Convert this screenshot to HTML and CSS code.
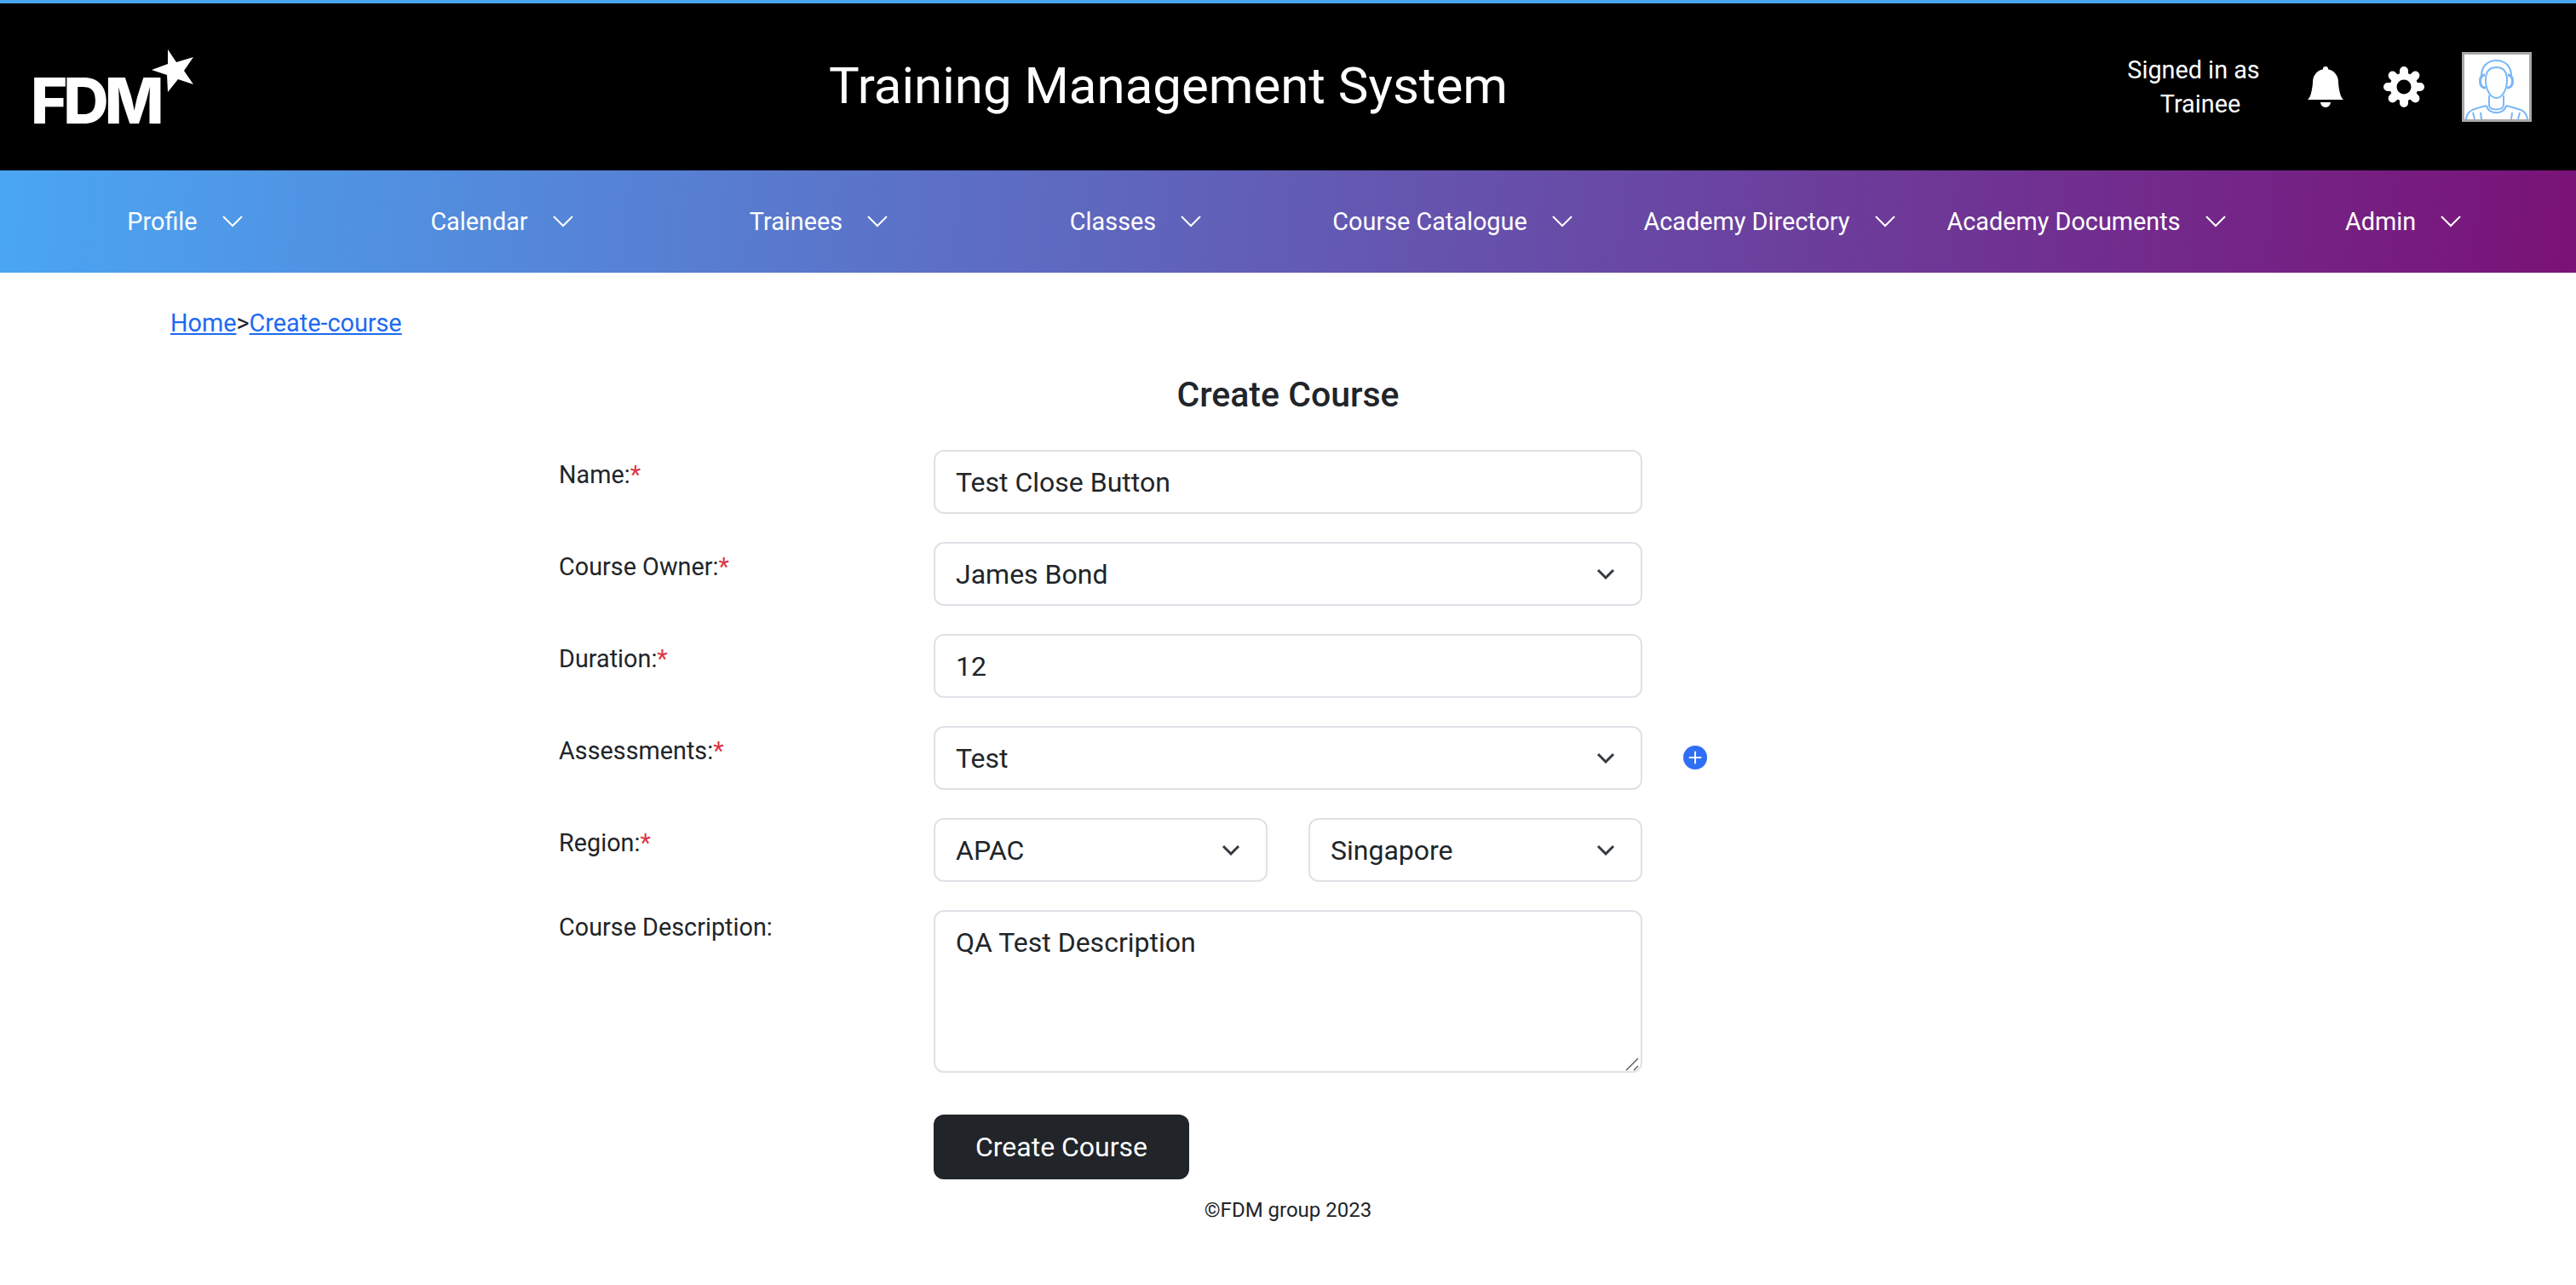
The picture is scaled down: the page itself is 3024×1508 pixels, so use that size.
FILE: index.html
```html
<!DOCTYPE html>
<html lang="en">
<head>
<meta charset="utf-8">
<title>Create Course</title>
<link rel="stylesheet" href="styles.css">
</head>
<body>
<header class="top">
  <a class="logo">
    <span class="logo-text">FDM</span>
    <svg class="logo-star" viewBox="0 0 50 50" width="50" height="50"><polygon points="19,0 29,15 49,9 38,25 49,41 31,35 19,50 18,30 0,24 19,17" fill="#fff"/></svg>
  </a>
  <h1 class="app-title">Training Management System</h1>
  <div class="user-area">
    <div class="signed"><div>Signed in as</div><div class="signed-role">Trainee</div></div>
    <svg class="bell" viewBox="1 0 14 16" width="42" height="48" fill="#fff"><path d="M8 16a2 2 0 0 0 2-2H6a2 2 0 0 0 2 2zm.995-14.901a1 1 0 1 0-1.99 0A5.002 5.002 0 0 0 3 6c0 1.098-.5 6-2 7h14c-1.5-1-2-5.902-2-7 0-2.42-1.72-4.44-4.005-4.901z"/></svg>
    <svg class="gear" viewBox="0 0 48 48" width="48" height="48"><g stroke="#fff" stroke-width="10" stroke-linecap="round"><path d="M24 5V43M5 24H43M10.6 10.6L37.4 37.4M37.4 10.6L10.6 37.4"/></g><circle cx="24" cy="24" r="16.5" fill="#fff"/><circle cx="24" cy="24" r="8.5" fill="#000"/></svg>
    <div class="avatar">
      <svg viewBox="0 0 76 76" width="76" height="76" fill="none" stroke="#7ab8f7" stroke-width="2"><path d="M25 30C25 20 29 15 37.5 15C46 15 50 20 50 30C50 42 44 51 37.5 51C31 51 25 42 25 30Z"/><path d="M20 28C19 14 27 7 37.5 7C48 7 56 14 55 28"/><path d="M24 24C20 24 18.500 27 18.500 31.500C18.500 36 20 39 25 39M51 24C55 24 56.500 27 56.500 31.500C56.500 36 55 39 50 39" stroke-width="3"/><path d="M29 48V60M46 48V60"/><path d="M26 60C28 71 47 71 49 60M29 60C31 66 44 66 46 60"/><path d="M2 76C3 65 11 64 26 60M74 76C73 65 65 64 49 60"/><path d="M12 76L10 68M20 76L19 68M55 76L56 68M63 76L65 68"/></svg>
    </div>
  </div>
</header>

<nav class="nav">
  <a class="nav-item">Profile<svg class="nav-chev" viewBox="0 0 24 14" width="24" height="14"><path d="M1 1L12 12L23 1"/></svg></a>
  <a class="nav-item">Calendar<svg class="nav-chev" viewBox="0 0 24 14" width="24" height="14"><path d="M1 1L12 12L23 1"/></svg></a>
  <a class="nav-item">Trainees<svg class="nav-chev" viewBox="0 0 24 14" width="24" height="14"><path d="M1 1L12 12L23 1"/></svg></a>
  <a class="nav-item">Classes<svg class="nav-chev" viewBox="0 0 24 14" width="24" height="14"><path d="M1 1L12 12L23 1"/></svg></a>
  <a class="nav-item">Course Catalogue<svg class="nav-chev" viewBox="0 0 24 14" width="24" height="14"><path d="M1 1L12 12L23 1"/></svg></a>
  <a class="nav-item">Academy Directory<svg class="nav-chev" viewBox="0 0 24 14" width="24" height="14"><path d="M1 1L12 12L23 1"/></svg></a>
  <a class="nav-item">Academy Documents<svg class="nav-chev" viewBox="0 0 24 14" width="24" height="14"><path d="M1 1L12 12L23 1"/></svg></a>
  <a class="nav-item">Admin<svg class="nav-chev" viewBox="0 0 24 14" width="24" height="14"><path d="M1 1L12 12L23 1"/></svg></a>
</nav>

<main class="main">
  <div class="crumbs"><a href="#">Home</a>&gt;<a href="#">Create-course</a></div>
  <h2 class="page-title">Create Course</h2>
  <form class="form">
    <div class="row">
      <label class="label">Name:<span class="req">*</span></label>
      <input class="control" type="text" value="Test Close Button">
    </div>
    <div class="row">
      <label class="label">Course Owner:<span class="req">*</span></label>
      <div class="select-wrap"><select class="control"><option>James Bond</option></select><svg class="sel-chev" viewBox="0 0 22 13" width="22" height="13"><path d="M2 2L11 11L20 2"/></svg></div>
    </div>
    <div class="row">
      <label class="label">Duration:<span class="req">*</span></label>
      <input class="control" type="text" value="12">
    </div>
    <div class="row">
      <label class="label">Assessments:<span class="req">*</span></label>
      <div class="select-wrap"><select class="control"><option>Test</option></select><svg class="sel-chev" viewBox="0 0 22 13" width="22" height="13"><path d="M2 2L11 11L20 2"/></svg></div>
      <svg class="add" viewBox="0 0 28 28" width="28" height="28"><circle cx="14" cy="14" r="14" fill="#2f6ff5"/><path d="M14 7.500V20.500M7.500 14H20.500" stroke="#fff" stroke-width="2" stroke-linecap="round"/></svg>
    </div>
    <div class="row">
      <label class="label">Region:<span class="req">*</span></label>
      <div class="pair">
        <div class="select-wrap half"><select class="control"><option>APAC</option></select><svg class="sel-chev" viewBox="0 0 22 13" width="22" height="13"><path d="M2 2L11 11L20 2"/></svg></div>
        <div class="select-wrap half"><select class="control"><option>Singapore</option></select><svg class="sel-chev" viewBox="0 0 22 13" width="22" height="13"><path d="M2 2L11 11L20 2"/></svg></div>
      </div>
    </div>
    <div class="row row-last">
      <label class="label label-plain">Course Description:</label>
      <div class="area-wrap">
        <textarea class="control area">QA Test Description</textarea>
        <svg class="grip" viewBox="0 0 16 16" width="16" height="16"><path d="M1 15L15 1M10 15L15 10"/></svg>
      </div>
    </div>
    <div class="row row-btn">
      <span class="label"></span>
      <button class="btn" type="button">Create Course</button>
    </div>
  </form>
</main>
<footer class="foot">©FDM group 2023</footer>
</body>
</html>
```
FILE: styles.css
```css
* { box-sizing: border-box; }
html, body { margin: 0; padding: 0; background: #fff; }
body { font-family: Roboto, "Liberation Sans", sans-serif; color: #212529; font-size: 32px; }

.top {
  height: 200px;
  border-top: 4px solid #4aa5f0;
  background: #000;
  color: #fff;
  display: grid;
  grid-template-columns: 600px 1542px 1fr;
  align-items: center;
}
.logo { position: relative; display: block; height: 196px; padding: 77px 0 0 36px; }
.logo-text {
  display: block;
  font-family: Inter, sans-serif;
  font-weight: 800;
  font-size: 74px;
  line-height: 74px;
  letter-spacing: -5px;
  color: #fff;
}
.logo-star { position: absolute; left: 178px; top: 54px; }
.app-title { margin: -2px 0 0; padding-left: 1px; font-weight: 400; font-size: 60px; line-height: 72px; text-align: center; }
.user-area { display: flex; align-items: center; justify-content: flex-end; height: 100%; padding-right: 52px; }
.signed { width: 156px; font-size: 28.8px; line-height: 40px; white-space: nowrap; text-align: center; }
.signed-role { padding-left: 16px; }
.bell { margin-left: 56px; }
.gear { margin-left: 47px; }
.avatar { margin-left: 44px; width: 82px; height: 82px; border: 3px solid #a8a8a8; background: #fff; overflow: hidden; }
.avatar svg { display: block; }

.nav {
  height: 120px;
  display: grid;
  grid-template-columns: repeat(8, 1fr);
  padding: 0 17px 0 31px;
  align-items: center;
  background: linear-gradient(95deg, #4aa6f3 0%, #7a1277 100%);
}
.nav-item { display: flex; justify-content: center; align-items: center; gap: 29px; color: #fff; font-size: 28.8px; line-height: 42px; white-space: nowrap; }
.nav-chev { fill: none; stroke: #fff; stroke-width: 2; }

.main { padding-top: 38px; }
.crumbs { padding-left: 200px; font-size: 28.8px; line-height: 42px; }
.crumbs a { color: #1d6af0; text-decoration: underline; }
.page-title { margin: 39px 0 41px; font-size: 41px; line-height: 48px; font-weight: 500; text-align: center; }

.form { margin-left: 656px; width: 1360px; }
.row { display: flex; align-items: flex-start; margin-bottom: 33px; }
.row-last { margin-bottom: 49px; }
.row-btn { margin-bottom: 18px; }
.label { flex: 0 0 440px; padding-top: 8px; font-size: 28.8px; line-height: 42px; }
.label-plain { padding-top: 0; line-height: 40px; }
.req { color: #dc3545; }

.control {
  display: block;
  width: 832px;
  height: 75px;
  margin: 0;
  padding: 0 24px;
  border: 2px solid #dee2e6;
  border-radius: 12px;
  background: #fff;
  color: #212529;
  font-family: Roboto, "Liberation Sans", sans-serif;
  font-size: 32px;
  outline: none;
  appearance: none;
}
.area-wrap { position: relative; width: 832px; }
.area { height: 191px; padding: 16px 24px; line-height: 40px; resize: none; }
.grip { position: absolute; right: 4px; bottom: 2px; fill: none; stroke: #555; stroke-width: 1.400; }
.select-wrap { position: relative; width: 832px; }
.sel-chev { position: absolute; right: 32px; top: 31px; fill: none; stroke: #343a40; stroke-width: 3; }
.pair { display: flex; gap: 48px; width: 832px; }
.half { flex: 1 1 0; width: auto; }
.half .control { width: 100%; }
.add { margin: 23px 0 0 48px; }

.btn {
  width: 300px;
  height: 76px;
  border: 0;
  border-radius: 12px;
  background: #212529;
  color: #fff;
  font-family: Roboto, "Liberation Sans", sans-serif;
  font-size: 32px;
}
.foot { font-size: 24px; line-height: 36px; text-align: center; padding-bottom: 68px; }
```
